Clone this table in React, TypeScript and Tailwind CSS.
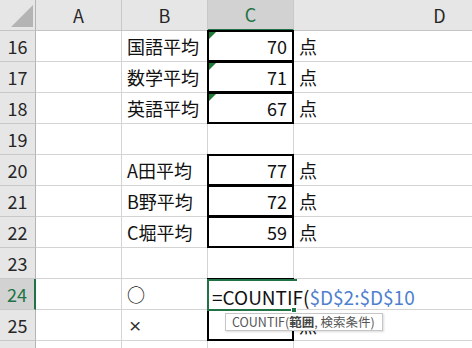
import React from "react";

type Row = {
  n: number;
  b?: React.ReactNode;
  c?: string;
  d?: string;
  boxed?: boolean;
  flag?: boolean;
};

const rows: Row[] = [
  { n: 16, b: "国語平均", c: "70", d: "点", boxed: true, flag: true },
  { n: 17, b: "数学平均", c: "71", d: "点", boxed: true, flag: true },
  { n: 18, b: "英語平均", c: "67", d: "点", boxed: true, flag: true },
  { n: 19 },
  { n: 20, b: "A田平均", c: "77", d: "点", boxed: true },
  { n: 21, b: "B野平均", c: "72", d: "点", boxed: true },
  { n: 22, b: "C堀平均", c: "59", d: "点", boxed: true },
  { n: 23 },
  { n: 24, b: "○", boxed: true },
  {
    n: 25,
    b: (
      <span className="pl-[2px] font-['Liberation_Sans',sans-serif] text-[21px] font-light text-[#333]">
        ×
      </span>
    ),
    d: "点",
    boxed: true,
  },
  { n: 26 },
];

const ACTIVE_ROW = 24;

function CornerCell() {
  return (
    <div className="flex items-end justify-end border-b border-r border-b-[#c4c4c4] border-r-[#b4b4b4] bg-[#e6e6e6] pb-[3px] pr-[2px]">
      <svg width="22" height="22" viewBox="0 0 22 22">
        <polygon points="22,0 22,22 0,22" fill="#b4b4b4" />
      </svg>
    </div>
  );
}

function ColHeader({ label, active }: { label: string; active?: boolean }) {
  return (
    <div
      className={`flex items-center justify-center border-r border-r-[#c8c8c8] text-[18px] ${
        active
          ? "border-b-2 border-b-[#217346] bg-[#d2d2d2] text-[#217346]"
          : "border-b border-b-[#c4c4c4] bg-[#e6e6e6] text-[#262626]"
      }`}
    >
      {label}
    </div>
  );
}

function RowHeader({ n }: { n: number }) {
  const active = n === ACTIVE_ROW;
  return (
    <div
      className={`flex items-center justify-center border-b border-b-[#c8c8c8] pt-[1px] text-[18px] ${
        active
          ? "border-r-2 border-r-[#217346] bg-[#d2d2d2] text-[#217346]"
          : "border-r border-r-[#b4b4b4] bg-[#e6e6e6] text-[#262626]"
      }`}
    >
      {n}
    </div>
  );
}

function Cell({
  children,
  className = "",
}: {
  children?: React.ReactNode;
  className?: string;
}) {
  return (
    <div
      className={`relative flex items-center border-b border-r border-[#d4d4d4] bg-white pt-[1px] text-[18px] text-[#111] ${className}`}
    >
      {children}
    </div>
  );
}

function FormulaEditor() {
  return (
    <>
      {/* in-cell editor with fill handle */}
      <div className="absolute -left-[1px] top-0 z-10 flex h-[32px] w-[90px] items-center border-l-2 border-t-2 border-[#217346] bg-white pl-[3px]">
        <span className="whitespace-nowrap text-[19px] leading-none text-[#111]">
          =COUNTIF(<span className="text-[#4f7fcf]">$D$2:$D$10</span>
        </span>
      </div>
      <div className="absolute -left-[1px] top-[30px] z-10 h-[2px] w-[84px] bg-[#217346]" />
      <div className="absolute left-[83px] top-[28px] z-10 h-[6px] w-[6px] border border-white bg-[#217346]" />
      {/* argument hint */}
      <div className="absolute left-[17px] top-[34px] z-20 flex h-[18px] w-[158px] items-center whitespace-nowrap border border-[#c6c6c6] bg-white pl-[6px] text-[12.5px] leading-none text-[#555] shadow-[1px_1px_2px_rgba(0,0,0,0.15)]">
        COUNTIF(<span className="font-bold text-[#444]">範囲</span>, 検索条件)
      </div>
    </>
  );
}

export default function App() {
  return (
    <div
      className="h-[348px] w-[472px] overflow-hidden bg-white"
      style={{ fontFamily: '"Noto Sans CJK JP", "Noto Sans", sans-serif' }}
    >
      <div className="grid w-[586px] grid-cols-[36px_86px_86px_86px_292px] auto-rows-[31px]">
        <CornerCell />
        <ColHeader label="A" />
        <ColHeader label="B" />
        <ColHeader label="C" active />
        <ColHeader label="D" />

        {rows.map((r) => (
          <React.Fragment key={r.n}>
            <RowHeader n={r.n} />
            <Cell />
            <Cell className="pl-[5px]">{r.b}</Cell>
            <Cell className="justify-end pr-[6px]">
              {r.boxed && (
                <div className="pointer-events-none absolute -bottom-[1px] -left-[1px] -right-[1px] -top-[1px] border-2 border-black" />
              )}
              {r.flag && (
                <svg
                  className="absolute left-[1px] top-[1px]"
                  width="7"
                  height="7"
                  viewBox="0 0 7 7"
                >
                  <polygon points="0,0 7,0 0,7" fill="#1e7a35" />
                </svg>
              )}
              {r.c}
              {r.n === ACTIVE_ROW && <FormulaEditor />}
            </Cell>
            <Cell className="pl-[5px]">{r.d}</Cell>
          </React.Fragment>
        ))}
      </div>
    </div>
  );
}
